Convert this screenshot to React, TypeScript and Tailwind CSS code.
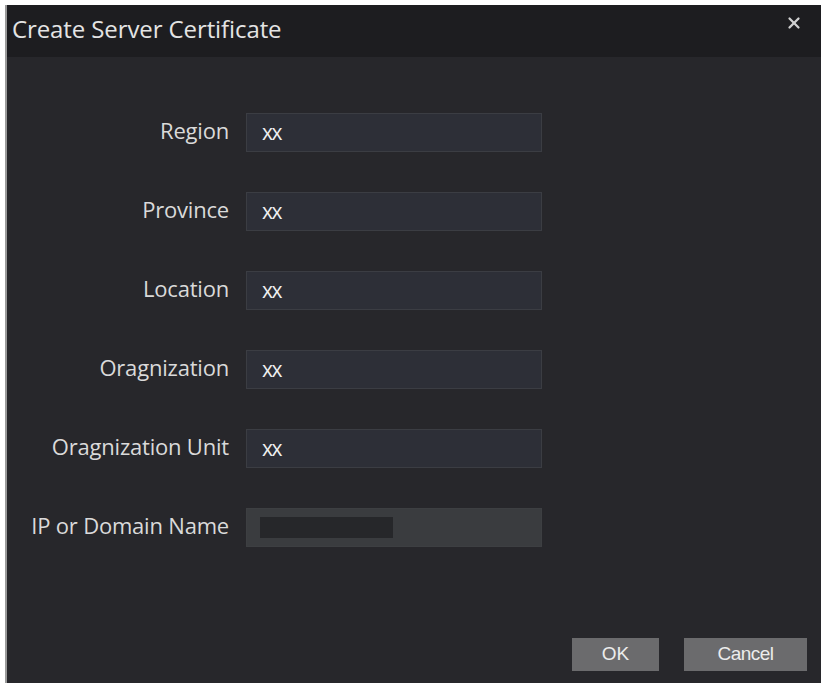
import { X } from 'lucide-react'

const FIELDS = [
  { label: 'Region', value: 'xx' },
  { label: 'Province', value: 'xx' },
  { label: 'Location', value: 'xx' },
  { label: 'Oragnization', value: 'xx' },
  { label: 'Oragnization Unit', value: 'xx' },
]

export default function App() {
  return (
    <div className="min-h-screen bg-white p-[5px] font-['Open_Sans',sans-serif]">
      <div className="flex h-[678px] w-[816px] flex-col border-l-2 border-[#9a9a9a] bg-[#27272b]">
        {/* Header */}
        <div className="flex h-[52px] items-center justify-between bg-[#1d1d20] pl-[5px] pr-[18px]">
          <span className="mb-[4px] text-[24px] tracking-[-0.1px] text-[#e4e4e4]">Create Server Certificate</span>
          <X size={18} strokeWidth={3} className="mb-[16px] text-[#d0d0d0]" />
        </div>

        {/* Form */}
        <div className="mt-[56px] flex flex-col gap-[40px]">
          {FIELDS.map(({ label, value }) => (
            <div key={label} className="flex items-center">
              <div className="mb-[4px] w-[222px] text-right text-[22px] tracking-[-0.2px] text-[#dadada]">{label}</div>
              <div className="ml-[17px] flex h-[39px] w-[296px] items-center border border-[#3b3d43] bg-[#2d2f37] px-[15px] text-[21px] tracking-[-1.5px] text-[#f0f0f0]">
                {value}
              </div>
            </div>
          ))}
          <div className="flex items-center">
            <div className="mb-[4px] w-[222px] text-right text-[22px] tracking-[-0.2px] text-[#dadada]">IP or Domain Name</div>
            <div className="ml-[17px] flex h-[39px] w-[296px] items-center border border-[#3d3f42] bg-[#3a3c3f] px-[13px]">
              <div className="h-[21px] w-[133px] bg-[#26272a]" />
            </div>
          </div>
        </div>

        {/* Footer */}
        <div className="mt-auto mb-[12px] flex justify-end gap-[25px] pr-[14px]">
          <button className="h-[33px] w-[87px] bg-[#6b6b6d] font-['Liberation_Sans',sans-serif] text-[19px] text-[#ececec]">
            OK
          </button>
          <button className="h-[33px] w-[123px] bg-[#6b6b6d] font-['Liberation_Sans',sans-serif] text-[19px] tracking-[-0.5px] text-[#ececec]">
            Cancel
          </button>
        </div>
      </div>
    </div>
  )
}
